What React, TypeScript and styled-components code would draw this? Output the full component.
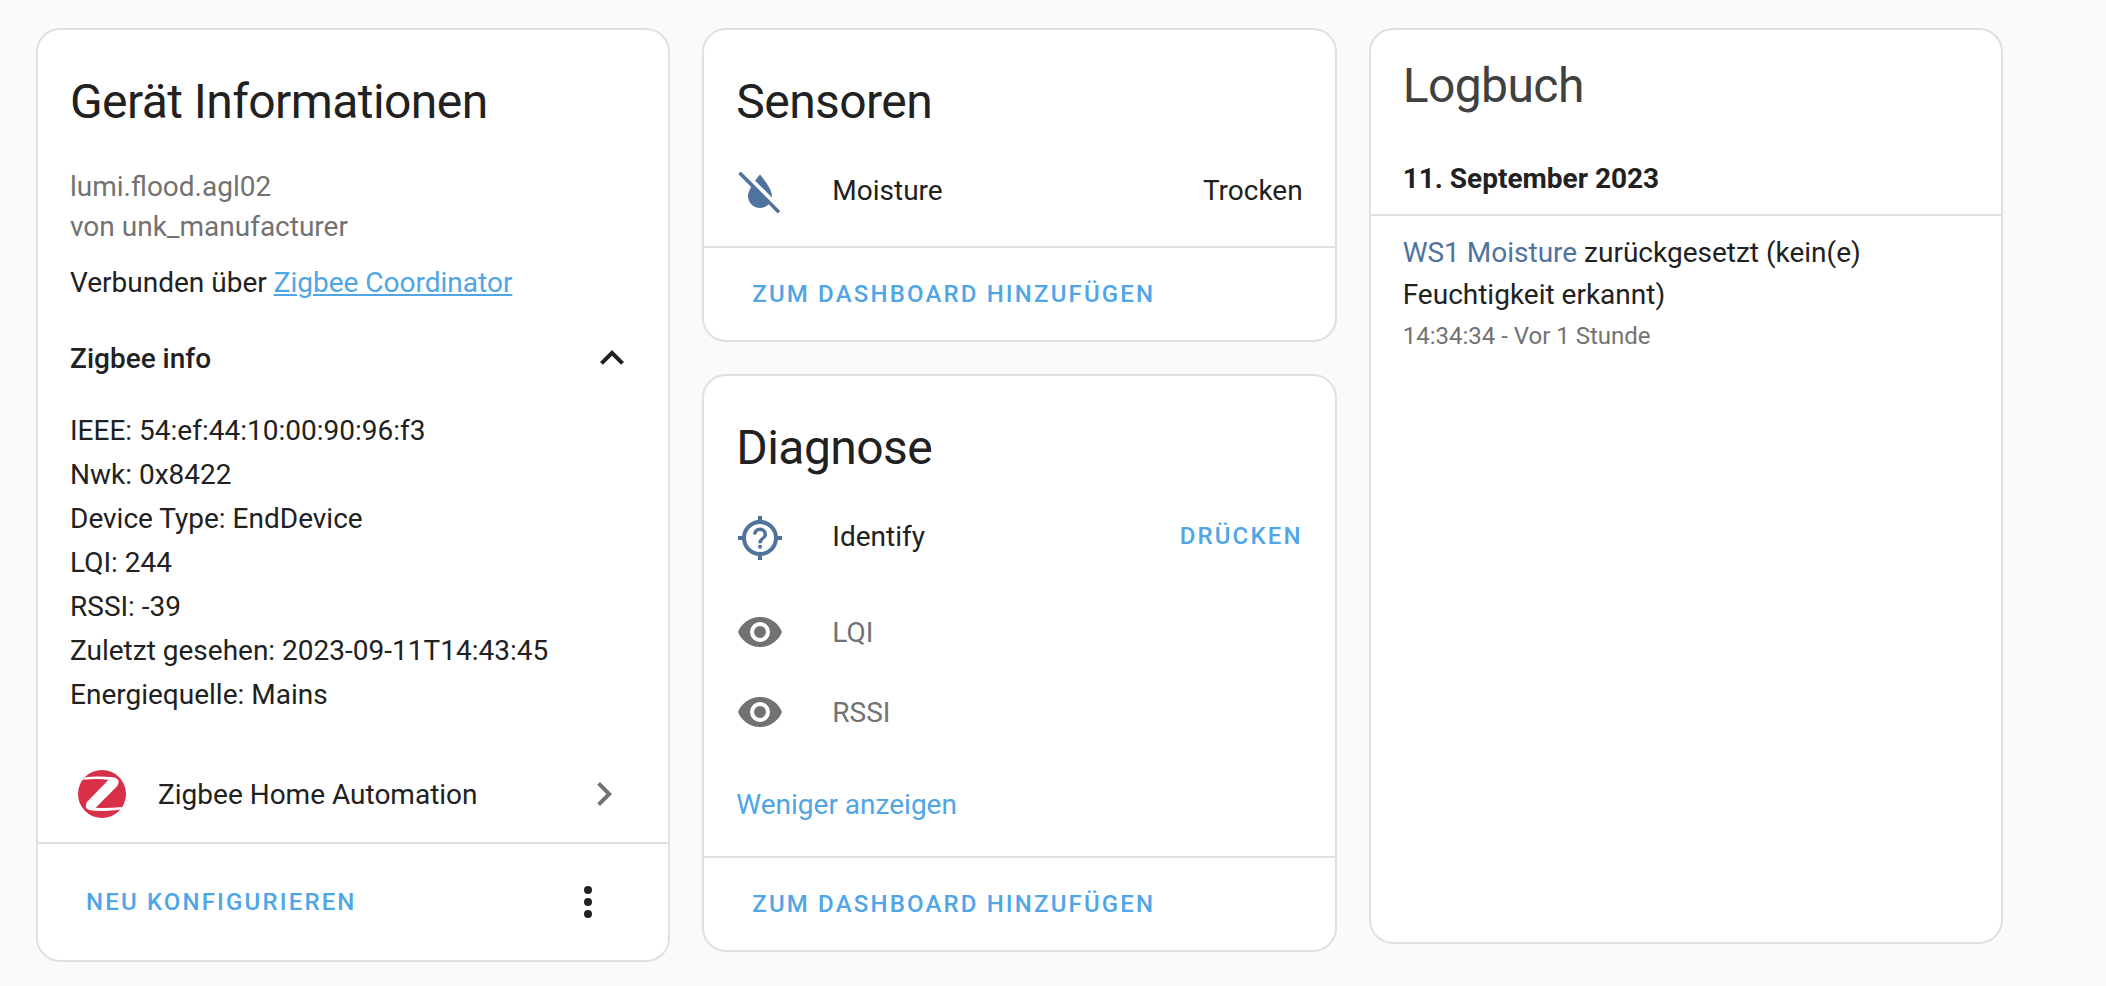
import React, { useState } from "react";
import styled, { createGlobalStyle } from "styled-components";

const color = {
  page: "#fafafa",
  card: "#ffffff",
  border: "#e0e0e0",
  text: "#212121",
  textSoft: "#414141",
  textMuted: "#727272",
  primary: "#4fa5e6",
  state: "#4f739d",
};

const GlobalStyle = createGlobalStyle`
  *, *::before, *::after { box-sizing: border-box; }
  body {
    margin: 0;
    background: ${color.page};
    color: ${color.text};
    font-family: Roboto, "Noto Sans", sans-serif;
    font-size: 28px;
    line-height: 40px;
    -webkit-font-smoothing: antialiased;
  }
  h2, h3, p, ul { margin: 0; padding: 0; font-weight: 400; }
  ul { list-style: none; }
  button { font-family: inherit; color: inherit; background: none; border: 0; padding: 0; cursor: pointer; }
`;

const Page = styled.main`
  display: grid;
  grid-template-columns: repeat(3, minmax(0, 1fr));
  align-items: start;
  gap: 32px;
  padding: 28px 103px 24px 36px;
`;

const Column = styled.div`
  display: flex;
  flex-direction: column;
  gap: 32px;
`;

const Card = styled.section`
  background: ${color.card};
  border: 2px solid ${color.border};
  border-radius: 24px;
  overflow: hidden;
`;

const CardTitle = styled.h2`
  padding: 24px 32px 0;
  font-size: 48px;
  line-height: 96px;
  letter-spacing: -0.012em;
`;

const LogTitle = styled.h2`
  padding: 0 32px;
  font-size: 48px;
  line-height: 112px;
  letter-spacing: -0.012em;
  color: ${color.textSoft};
`;

const DeviceBody = styled.div`
  padding: 17px 32px 0;
`;

const Muted = styled.p`
  color: ${color.textMuted};
`;

const Connection = styled.p`
  margin: 16px 0 7px;
`;

const TextLink = styled.a<{ $underline?: boolean }>`
  color: ${(p) => (p.$underline ? color.primary : color.state)};
  text-decoration: ${(p) => (p.$underline ? "underline" : "none")};
`;

const ExpandButton = styled.button`
  display: flex;
  align-items: center;
  justify-content: space-between;
  width: 100%;
  height: 96px;
  font-size: 28px;
  font-weight: 500;
`;

const InfoList = styled.ul`
  padding: 3px 0 29px;
  line-height: 44px;
`;

const IntegrationLink = styled.a`
  display: flex;
  align-items: center;
  gap: 32px;
  height: 96px;
  padding: 0 8px;
  color: inherit;
  text-decoration: none;
`;

const RowText = styled.span<{ $grow?: boolean }>`
  flex: ${(p) => (p.$grow ? 1 : "none")};
  padding-top: 2px;
`;

const Actions = styled.div<{ $tall?: boolean }>`
  display: flex;
  align-items: center;
  justify-content: space-between;
  height: ${(p) => (p.$tall ? 118 : 94)}px;
  padding: 0 32px;
  border-top: 2px solid ${color.border};
`;

const TextButton = styled.button<{ $flush?: boolean }>`
  height: 72px;
  padding: 0 ${(p) => (p.$flush ? 0 : 16)}px;
  font-size: 24px;
  font-weight: 500;
  letter-spacing: 0.09em;
  text-transform: uppercase;
  color: ${color.primary};
`;

const IconButton = styled.button`
  display: grid;
  place-items: center;
  width: 96px;
  height: 96px;
`;

const EntityList = styled.div`
  display: flex;
  flex-direction: column;
  padding: 0 32px;
`;

const EntityRow = styled.div<{ $muted?: boolean }>`
  display: flex;
  align-items: center;
  gap: 48px;
  height: 80px;
  color: ${(p) => (p.$muted ? color.textMuted : color.text)};
`;

const StateIcon = styled.span`
  display: flex;
  padding-top: 4px;
  color: ${color.state};
`;

const HiddenEntities = styled.div`
  padding-top: 16px;
`;

const ShowLess = styled.button`
  height: 104px;
  font-size: 28px;
  text-align: left;
  color: ${color.primary};
`;

const Spacer = styled.div`
  height: 16px;
`;

const LogDate = styled.h3`
  padding: 17px 32px 15px;
  font-size: 28px;
  font-weight: 700;
  border-bottom: 2px solid ${color.border};
`;

const LogEntries = styled.ul`
  min-height: 726px;
  padding: 16px 32px;
`;

const LogText = styled.p`
  line-height: 42px;
`;

const LogTime = styled.p`
  font-size: 24px;
  color: ${color.textMuted};
`;

const Svg = styled.svg`
  display: block;
  flex: none;
  width: 48px;
  height: 48px;
  fill: currentColor;
`;

const paths = {
  chevronUp: "M7.41,15.41L12,10.83L16.59,15.41L18,14L12,8L6,14L7.41,15.41Z",
  chevronDown: "M7.41,8.58L12,13.17L16.59,8.58L18,10L12,16L6,10L7.41,8.58Z",
  chevronRight: "M8.59,16.58L13.17,12L8.59,7.41L10,6L16,12L10,18L8.59,16.58Z",
  dots: "M12,16A2,2 0 0,1 14,18A2,2 0 0,1 12,20A2,2 0 0,1 10,18A2,2 0 0,1 12,16M12,10A2,2 0 0,1 14,12A2,2 0 0,1 12,14A2,2 0 0,1 10,12A2,2 0 0,1 12,10M12,4A2,2 0 0,1 14,6A2,2 0 0,1 12,8A2,2 0 0,1 10,6A2,2 0 0,1 12,4Z",
  waterOff:
    "M20.84 22.73L16.29 18.18C15.2 19.3 13.69 20 12 20C8.69 20 6 17.31 6 14C6 12.67 6.67 11.03 7.55 9.44L1.11 3L2.39 1.73L22.11 21.46L20.84 22.73M18 14C18 10 12 3.25 12 3.25S10.84 4.55 9.55 6.35L17.95 14.75C18 14.5 18 14.25 18 14Z",
  eye: "M12,9A3,3 0 0,0 9,12A3,3 0 0,0 12,15A3,3 0 0,0 15,12A3,3 0 0,0 12,9M12,17A5,5 0 0,1 7,12A5,5 0 0,1 12,7A5,5 0 0,1 17,12A5,5 0 0,1 12,17M12,4.5C7,4.5 2.73,7.61 1,12C2.73,16.39 7,19.5 12,19.5C17,19.5 21.27,16.39 23,12C21.27,7.61 17,4.5 12,4.5Z",
  crosshair:
    "M3.05,13H1V11H3.05C3.5,6.83 6.83,3.5 11,3.05V1H13V3.05C17.17,3.5 20.5,6.83 20.95,11H23V13H20.95C20.5,17.17 17.17,20.5 13,20.95V23H11V20.95C6.83,20.5 3.5,17.17 3.05,13M12,5A7,7 0 0,0 5,12A7,7 0 0,0 12,19A7,7 0 0,0 19,12A7,7 0 0,0 12,5Z",
  question:
    "M11.13,17.25H12.88V15.5H11.13V17.25M12,6.75A3.5,3.5 0 0,0 8.5,10.25H10.25A1.75,1.75 0 0,1 12,8.5A1.75,1.75 0 0,1 13.75,10.25C13.75,12 11.13,11.78 11.13,14.63H12.88C12.88,12.66 15.5,12.44 15.5,10.25A3.5,3.5 0 0,0 12,6.75Z",
};

function Icon({ d, fill }: { d: string; fill?: string }) {
  return (
    <Svg viewBox="0 0 24 24" aria-hidden="true">
      <path d={d} fill={fill} />
    </Svg>
  );
}

function ZigbeeLogo() {
  return (
    <Svg viewBox="0 0 48 48" aria-hidden="true">
      <circle cx="24" cy="24" r="24" fill="#d9304a" />
      <path
        fill="#ffffff"
        d="M6.8 7.6C15 6.2 25 6.4 33 7C38 7.4 41.2 9.4 40.6 12.6C40.2 15 39.4 15.8 37.6 17.8L17.6 37.8C26 38.4 35 37.9 44 36.9L42.4 39.4C33 40.8 22 41.4 14 40.5C9.6 40 7.6 38 7.8 35.4C8 33 8.8 32 10.4 30.4L30.6 9.8C22 8.6 14 8.8 5.2 9.8Z"
      />
    </Svg>
  );
}

const zigbeeInfo = [
  "IEEE: 54:ef:44:10:00:90:96:f3",
  "Nwk: 0x8422",
  "Device Type: EndDevice",
  "LQI: 244",
  "RSSI: -39",
  "Zuletzt gesehen: 2023-09-11T14:43:45",
  "Energiequelle: Mains",
];

function DeviceCard() {
  const [open, setOpen] = useState(true);
  return (
    <Card>
      <CardTitle>Gerät Informationen</CardTitle>
      <DeviceBody>
        <Muted>lumi.flood.agl02</Muted>
        <Muted>von unk_manufacturer</Muted>
        <Connection>
          Verbunden über{" "}
          <TextLink $underline href="#coordinator">
            Zigbee Coordinator
          </TextLink>
        </Connection>
        <ExpandButton type="button" aria-expanded={open} onClick={() => setOpen(!open)}>
          Zigbee info
          <Icon d={open ? paths.chevronUp : paths.chevronDown} />
        </ExpandButton>
        {open && (
          <InfoList>
            {zigbeeInfo.map((line) => (
              <li key={line}>{line}</li>
            ))}
          </InfoList>
        )}
        <IntegrationLink href="#integration">
          <ZigbeeLogo />
          <RowText $grow>Zigbee Home Automation</RowText>
          <Icon d={paths.chevronRight} fill={color.textMuted} />
        </IntegrationLink>
      </DeviceBody>
      <Actions $tall>
        <TextButton type="button">Neu konfigurieren</TextButton>
        <IconButton type="button" aria-label="Menü">
          <Icon d={paths.dots} />
        </IconButton>
      </Actions>
    </Card>
  );
}

function SensorCard() {
  return (
    <Card>
      <CardTitle>Sensoren</CardTitle>
      <EntityList>
        <EntityRow>
          <StateIcon>
            <Icon d={paths.waterOff} />
          </StateIcon>
          <RowText $grow>Moisture</RowText>
          <RowText>Trocken</RowText>
        </EntityRow>
      </EntityList>
      <Spacer />
      <Actions>
        <TextButton type="button">Zum Dashboard hinzufügen</TextButton>
      </Actions>
    </Card>
  );
}

function DiagnosticCard() {
  const [all, setAll] = useState(true);
  return (
    <Card>
      <CardTitle>Diagnose</CardTitle>
      <EntityList>
        <EntityRow>
          <StateIcon>
            <Icon d={paths.crosshair + paths.question} />
          </StateIcon>
          <RowText $grow>Identify</RowText>
          <TextButton $flush type="button">
            Drücken
          </TextButton>
        </EntityRow>
        {all && (
          <HiddenEntities>
            {["LQI", "RSSI"].map((name) => (
              <EntityRow key={name} $muted>
                <Icon d={paths.eye} />
                <RowText $grow>{name}</RowText>
              </EntityRow>
            ))}
          </HiddenEntities>
        )}
        <ShowLess type="button" onClick={() => setAll(!all)}>
          {all ? "Weniger anzeigen" : "Mehr anzeigen"}
        </ShowLess>
      </EntityList>
      <Actions>
        <TextButton type="button">Zum Dashboard hinzufügen</TextButton>
      </Actions>
    </Card>
  );
}

function LogbookCard() {
  return (
    <Card>
      <LogTitle>Logbuch</LogTitle>
      <LogDate>11. September 2023</LogDate>
      <LogEntries>
        <li>
          <LogText>
            <TextLink href="#moisture">WS1 Moisture</TextLink> zurückgesetzt (kein(e) Feuchtigkeit erkannt)
          </LogText>
          <LogTime>14:34:34 - Vor 1 Stunde</LogTime>
        </li>
      </LogEntries>
    </Card>
  );
}

export default function App() {
  return (
    <>
      <GlobalStyle />
      <Page>
        <Column>
          <DeviceCard />
        </Column>
        <Column>
          <SensorCard />
          <DiagnosticCard />
        </Column>
        <Column>
          <LogbookCard />
        </Column>
      </Page>
    </>
  );
}
